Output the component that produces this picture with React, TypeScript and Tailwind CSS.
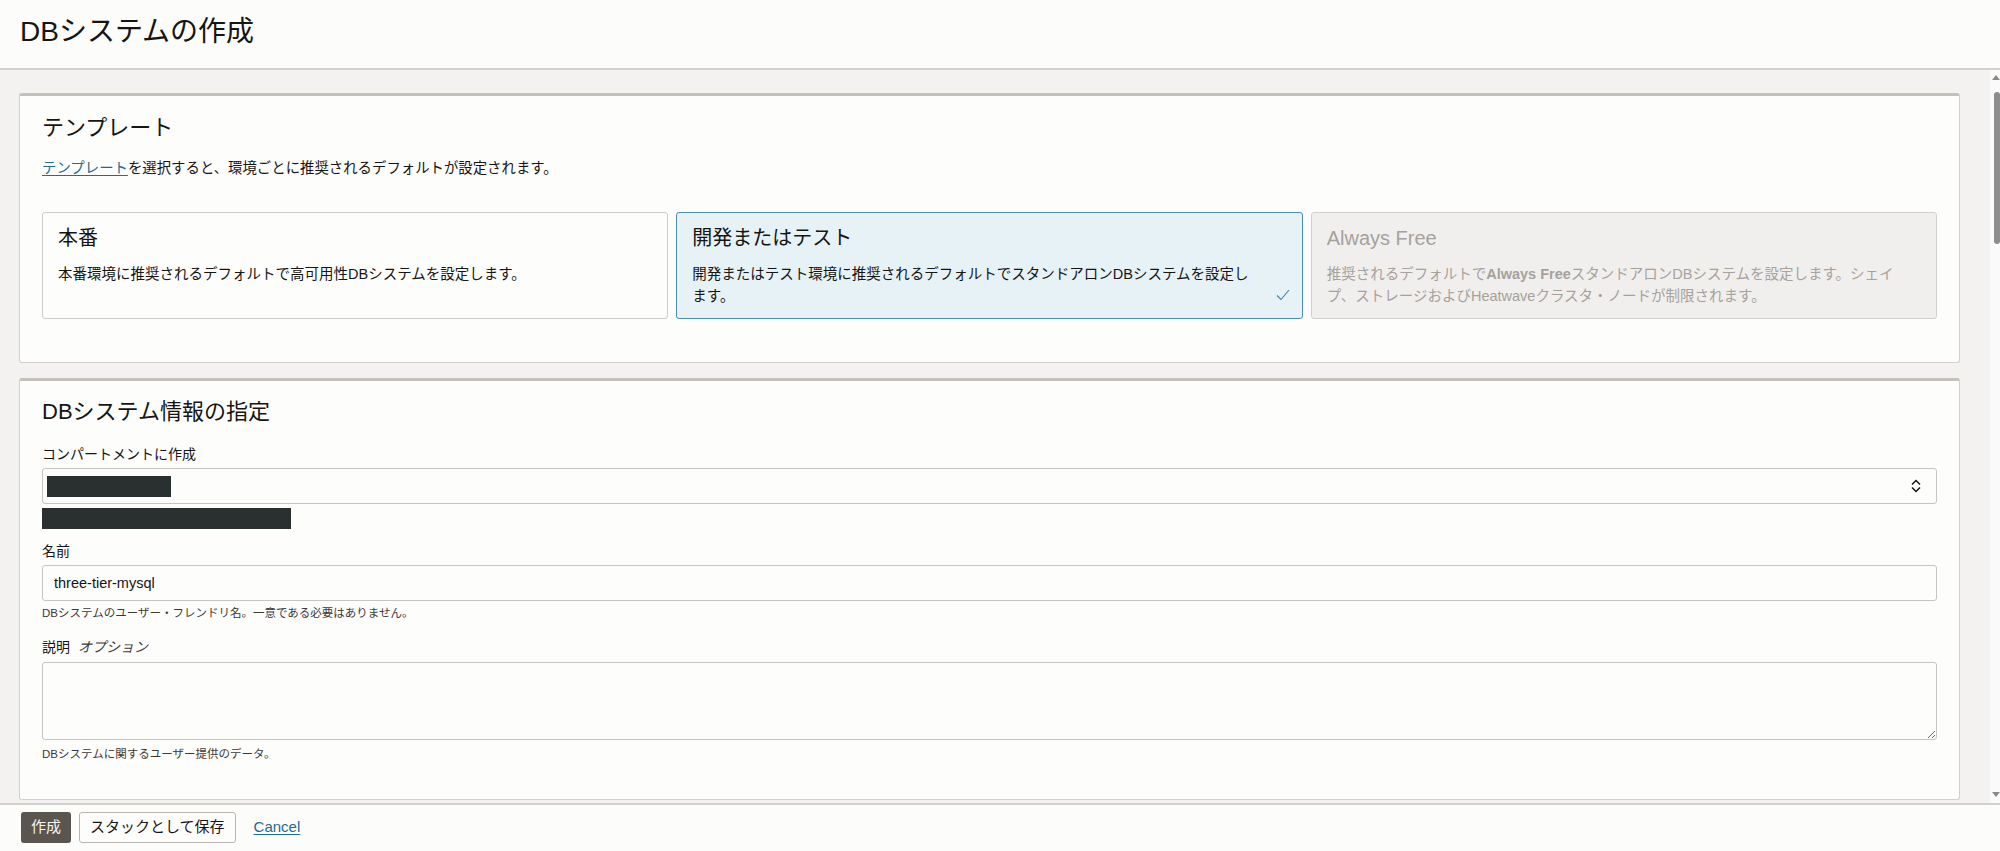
import { useState } from "react";

const font = { fontFamily: '"Liberation Sans", "Noto Sans CJK JP", sans-serif' };

function TemplateCard({
  title,
  lines,
  selected,
  disabled,
}: {
  title: string;
  lines: React.ReactNode[];
  selected?: boolean;
  disabled?: boolean;
}) {
  let cls = "bg-[#fdfdfc] border-[#cfcbc6] text-[#161513]";
  if (selected) cls = "bg-[#e7f2f6] border-[#4d8eaf] text-[#161513]";
  if (disabled) cls = "bg-[#f1efed] border-[#d3cfca] text-[#a6a19c]";

  return (
    <div className={`relative flex-1 h-[107px] border rounded-[3px] px-[15px] pt-[12px] ${cls}`}>
      <div className="text-[20px] leading-[26px]">{title}</div>
      <div className="mt-[12px] text-[14.5px] leading-[22px]">
        {lines.map((l, i) => (
          <div key={i} className="whitespace-nowrap">
            {l}
          </div>
        ))}
      </div>
      {selected && (
        <svg
          className="absolute right-[12px] bottom-[17px]"
          width="14"
          height="12"
          viewBox="0 0 14 12"
          fill="none"
        >
          <polyline points="1,6.5 5,10.5 13,1" stroke="#3f86a8" strokeWidth="1.1" />
        </svg>
      )}
    </div>
  );
}

export default function App() {
  const [name, setName] = useState("three-tier-mysql");

  return (
    <div className="h-[851px] w-full flex flex-col bg-[#fcfcfb] text-[#161513] overflow-hidden" style={font}>
      {/* header */}
      <div className="h-[70px] shrink-0 border-b-2 border-[#d4d0cb] px-[20px] flex items-center pb-[4px]">
        <h1 className="text-[28px] leading-[34px]">DBシステムの作成</h1>
      </div>

      {/* scroll area */}
      <div className="flex-1 flex min-h-0 bg-[#f3f2f0]">
        <div className="flex-1 min-w-0 overflow-hidden pl-[19px] pr-[30px] pt-[23px] flex flex-col gap-[15px]">
          {/* template */}
          <section className="shrink-0 bg-[#fdfdfc] border border-[#d3cfca] border-t-[3px] border-t-[#c5c0ba] rounded-[3px] px-[22px] pt-[18px] pb-[43px]">
            <h2 className="text-[22px] leading-[28px]">テンプレート</h2>
            <p className="mt-[16px] text-[14.4px] leading-[20px]">
              <a href="#" className="text-[#1f6c93] underline underline-offset-2">
                テンプレート
              </a>
              を選択すると、環境ごとに推奨されるデフォルトが設定されます。
            </p>
            <div className="mt-[34px] flex gap-[8px]">
              <TemplateCard
                title="本番"
                lines={["本番環境に推奨されるデフォルトで高可用性DBシステムを設定します。"]}
              />
              <TemplateCard
                title="開発またはテスト"
                selected
                lines={[
                  "開発またはテスト環境に推奨されるデフォルトでスタンドアロンDBシステムを設定し",
                  "ます。",
                ]}
              />
              <TemplateCard
                title="Always Free"
                disabled
                lines={[
                  <>
                    推奨されるデフォルトで<b className="font-bold">Always Free</b>
                    スタンドアロンDBシステムを設定します。シェイ
                  </>,
                  "プ、ストレージおよびHeatwaveクラスタ・ノードが制限されます。",
                ]}
              />
            </div>
          </section>

          {/* db system info */}
          <section className="shrink-0 bg-[#fdfdfc] border border-[#d3cfca] border-t-[3px] border-t-[#c5c0ba] rounded-[3px] px-[22px] pt-[16px] pb-[37px]">
            <h2 className="text-[22px] leading-[30px]">DBシステム情報の指定</h2>

            <label className="block mt-[17px] text-[14px] leading-[20px]">コンパートメントに作成</label>
            <div className="mt-[4px] h-[36px] border border-[#c8c4bf] rounded-[3px] bg-[#fdfdfc] flex items-center pl-[4px] pr-[14px]">
              <div className="w-[124px] h-[21px] bg-[#2a2f2f]" />
              <div className="flex-1" />
              <svg width="12" height="18" viewBox="0 0 12 18" fill="none">
                <path d="M2 7.5 L6 3.5 L10 7.5" stroke="#161513" strokeWidth="1.5" />
                <path d="M2 10.5 L6 14.5 L10 10.5" stroke="#161513" strokeWidth="1.5" />
              </svg>
            </div>
            <div className="mt-[4px] w-[249px] h-[21px] bg-[#2a2f2f]" />

            <label className="block mt-[12px] text-[14px] leading-[20px]">名前</label>
            <input
              value={name}
              onChange={(e) => setName(e.target.value)}
              className="mt-[4px] block w-full h-[36px] border border-[#c8c4bf] rounded-[3px] bg-[#fdfdfc] px-[11px] text-[14.5px] outline-none"
              style={font}
            />
            <p className="mt-[4px] text-[11.5px] leading-[16px] text-[#3d3935]">
              DBシステムのユーザー・フレンドリ名。一意である必要はありません。
            </p>

            <label className="block mt-[16px] text-[14px] leading-[20px]">
              説明 <i className="ml-[4px] text-[#3d3935]">オプション</i>
            </label>
            <textarea className="mt-[5px] block w-full h-[78px] border border-[#c8c4bf] rounded-[3px] bg-[#fdfdfc] outline-none" />
            <p className="mt-[6px] text-[11.5px] leading-[16px] text-[#3d3935]">
              DBシステムに関するユーザー提供のデータ。
            </p>
          </section>
        </div>

        {/* fake scrollbar */}
        <div className="w-[10px] shrink-0 bg-[#fafafa] flex flex-col items-end">
          <div className="mt-[5px] w-0 h-0 border-l-[4px] border-r-[4px] border-b-[5px] border-l-transparent border-r-transparent border-b-[#8a8a8a]" />
          <div className="mt-[12px] w-[6px] h-[152px] rounded-[3px] bg-[#8c8c8c]" />
          <div className="flex-1" />
          <div className="mb-[6px] w-0 h-0 border-l-[4px] border-r-[4px] border-t-[5px] border-l-transparent border-r-transparent border-t-[#8a8a8a]" />
        </div>
      </div>

      {/* footer */}
      <div className="h-[48px] shrink-0 border-t-2 border-[#d4d0cb] bg-[#fcfcfb] flex items-center gap-[8px] pl-[21px] pb-[2px]">
        <button className="h-[31px] px-[10px] rounded-[3px] bg-[#5b5550] text-[#f5f4f2] text-[15px]">作成</button>
        <button className="h-[31px] px-[10px] rounded-[3px] border border-[#bab5b0] bg-[#fdfdfc] text-[15px]">
          スタックとして保存
        </button>
        <a href="#" className="ml-[10px] text-[15px] text-[#1f6c93] underline underline-offset-2">
          Cancel
        </a>
      </div>
    </div>
  );
}
